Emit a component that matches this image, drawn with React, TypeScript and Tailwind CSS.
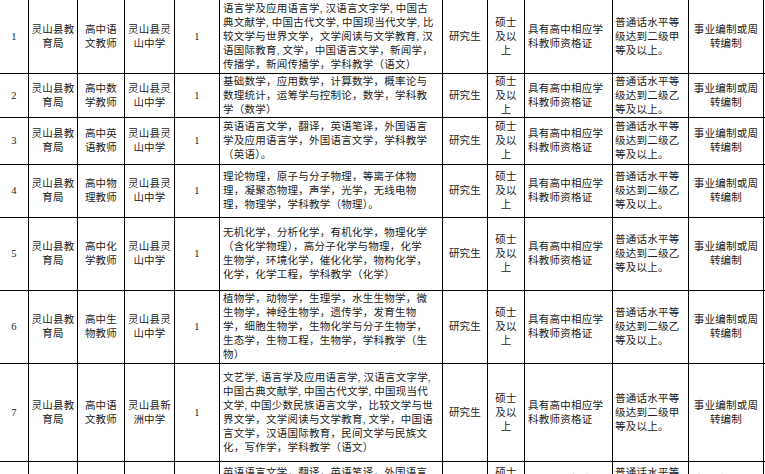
import React from 'react';

type Row = {
  no: string;
  unit: string[];
  post: string[];
  school: string[];
  count: string;
  major: string[];
  edu: string;
  degree: string[];
  cert: string[];
  mandarin: string[];
  staff: string[];
};

const unit = ['灵山县教', '育局'];
const school = ['灵山县灵', '山中学'];
const degree = ['硕士', '及以', '上'];
const cert = ['具有高中相应学', '科教师资格证'];
const staff = ['事业编制或周', '转编制'];
const jia = ['普通话水平等', '级达到二级甲', '等及以上。'];
const yi = ['普通话水平等', '级达到二级乙', '等及以上。'];

const rows: Row[] = [
  {
    no: '1', unit, post: ['高中语', '文教师'], school, count: '1',
    major: [
      '语言学及应用语言学, 汉语言文字学, 中国古',
      '典文献学, 中国古代文学, 中国现当代文学, 比',
      '较文学与世界文学，文学阅读与文学教育, 汉',
      '语国际教育, 文学，中国语言文学，新闻学，',
      '传播学，新闻传播学，学科教学（语文）',
    ],
    edu: '研究生', degree, cert, mandarin: jia, staff,
  },
  {
    no: '2', unit, post: ['高中数', '学教师'], school, count: '1',
    major: [
      '基础数学，应用数学，计算数学，概率论与',
      '数理统计，运筹学与控制论，数学，学科教',
      '学（数学）',
    ],
    edu: '研究生', degree, cert, mandarin: yi, staff,
  },
  {
    no: '3', unit, post: ['高中英', '语教师'], school, count: '1',
    major: [
      '英语语言文学，翻译，英语笔译，外国语言',
      '学及应用语言学，外国语言文学，学科教学',
      '（英语）。',
    ],
    edu: '研究生', degree, cert, mandarin: yi, staff,
  },
  {
    no: '4', unit, post: ['高中物', '理教师'], school, count: '1',
    major: [
      '理论物理，原子与分子物理，等离子体物',
      '理，凝聚态物理，声学，光学，无线电物',
      '理，物理学，学科教学（物理）。',
    ],
    edu: '研究生', degree, cert, mandarin: yi, staff,
  },
  {
    no: '5', unit, post: ['高中化', '学教师'], school, count: '1',
    major: [
      '无机化学，分析化学，有机化学，物理化学',
      '（含化学物理），高分子化学与物理，化学',
      '生物学，环境化学，催化化学，物构化学，',
      '化学，化学工程，学科教学（化学）',
    ],
    edu: '研究生', degree, cert, mandarin: yi, staff,
  },
  {
    no: '6', unit, post: ['高中生', '物教师'], school, count: '1',
    major: [
      '植物学，动物学，生理学，水生生物学，微',
      '生物学，神经生物学，遗传学，发育生物',
      '学，细胞生物学，生物化学与分子生物学，',
      '生态学，生物工程，生物学，学科教学（生',
      '物）',
    ],
    edu: '研究生', degree, cert, mandarin: yi, staff,
  },
  {
    no: '7', unit, post: ['高中语', '文教师'], school: ['灵山县新', '洲中学'], count: '1',
    major: [
      '文艺学, 语言学及应用语言学, 汉语言文字学,',
      '中国古典文献学, 中国古代文学, 中国现当代',
      '文学, 中国少数民族语言文学，比较文学与世',
      '界文学，文学阅读与文学教育, 文学，中国语',
      '言文学，汉语国际教育，民间文学与民族文',
      '化，写作学，学科教学（语文）',
    ],
    edu: '研究生', degree, cert, mandarin: jia, staff,
  },
  {
    no: '8', unit, post: ['高中英', '语教师'], school: ['灵山县新', '洲中学'], count: '1',
    major: [
      '英语语言文学，翻译，英语笔译，外国语言',
      '学及应用语言学，外国语言文学，学科教学',
      '（英语）。',
    ],
    edu: '研究生', degree, cert, mandarin: yi, staff,
  },
];

const Cell = ({ lines, left = false, pad = 'px-[3px]' }: { lines: string[]; left?: boolean; pad?: string }) => (
  <div className={`bg-white flex flex-col justify-center overflow-hidden ${pad} ${left ? 'items-start' : 'items-center'}`}>
    {lines.map((l, i) => (
      <div key={i} className="whitespace-nowrap leading-[14px]">
        {l}
      </div>
    ))}
  </div>
);

export default function App() {
  return (
    <div className="w-[765px] h-[474px] overflow-hidden bg-white">
      <div
        className="grid w-max grid-cols-[28px_48px_46px_49px_44px_222px_44px_36px_87px_75px_74px_60px] grid-rows-[73px_43px_46px_52px_72px_72px_97px_49px] gap-px bg-black text-[10.5px] tracking-[0.25px] text-[#222]"
        style={{ fontFamily: '"Liberation Serif", "Noto Sans CJK SC", serif' }}
      >
        {rows.map((r) => (
          <React.Fragment key={r.no}>
            <Cell lines={[r.no]} />
            <Cell lines={r.unit} />
            <Cell lines={r.post} />
            <Cell lines={r.school} />
            <Cell lines={[r.count]} />
            <Cell lines={r.major} left />
            <Cell lines={[r.edu]} />
            <Cell lines={r.degree} />
            <Cell lines={r.cert} left />
            <Cell lines={r.mandarin} left pad="px-[2px]" />
            <Cell lines={r.staff} />
            <Cell lines={[]} />
          </React.Fragment>
        ))}
      </div>
    </div>
  );
}
